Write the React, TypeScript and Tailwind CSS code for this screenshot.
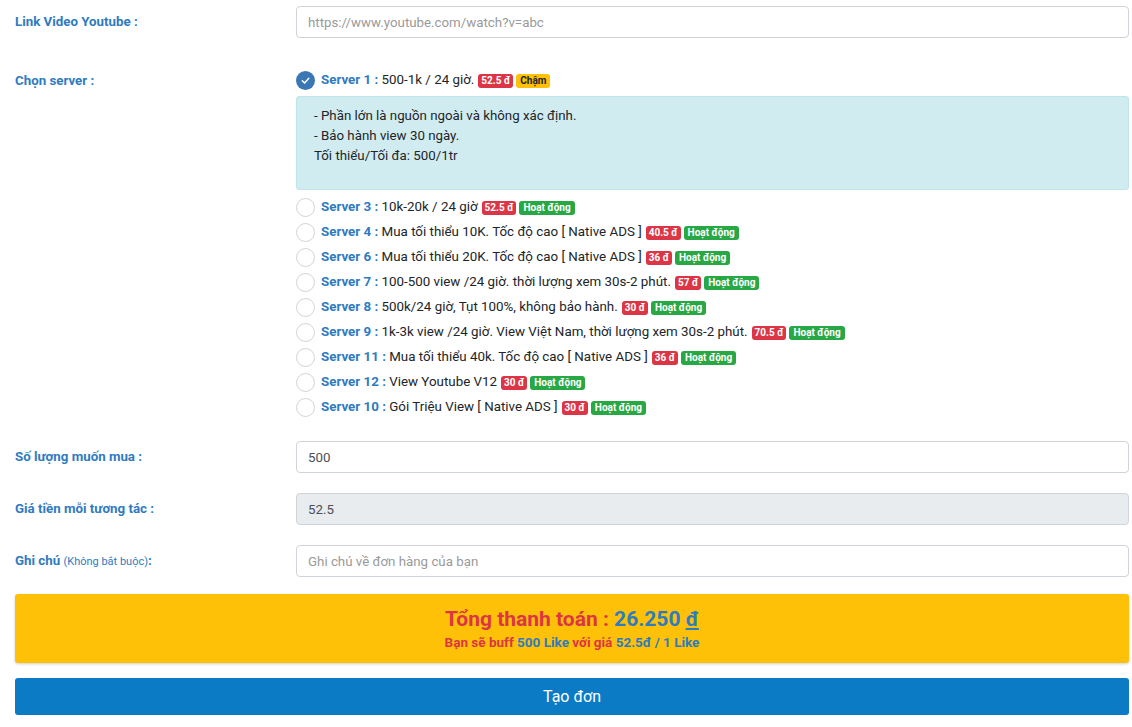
import { useState } from 'react';

type Server = { id: string; name: string; desc: string; price: string; status: 'slow' | 'ok' };

const SERVERS: Server[] = [
  { id: 's1', name: 'Server 1', desc: '500-1k / 24 giờ.', price: '52.5 đ', status: 'slow' },
  { id: 's3', name: 'Server 3', desc: '10k-20k / 24 giờ', price: '52.5 đ', status: 'ok' },
  { id: 's4', name: 'Server 4', desc: 'Mua tối thiểu 10K. Tốc độ cao [ Native ADS ]', price: '40.5 đ', status: 'ok' },
  { id: 's6', name: 'Server 6', desc: 'Mua tối thiểu 20K. Tốc độ cao [ Native ADS ]', price: '36 đ', status: 'ok' },
  { id: 's7', name: 'Server 7', desc: '100-500 view /24 giờ. thời lượng xem 30s-2 phút.', price: '57 đ', status: 'ok' },
  { id: 's8', name: 'Server 8', desc: '500k/24 giờ, Tụt 100%, không bảo hành.', price: '30 đ', status: 'ok' },
  { id: 's9', name: 'Server 9', desc: '1k-3k view /24 giờ. View Việt Nam, thời lượng xem 30s-2 phút.', price: '70.5 đ', status: 'ok' },
  { id: 's11', name: 'Server 11', desc: 'Mua tối thiểu 40k. Tốc độ cao [ Native ADS ]', price: '36 đ', status: 'ok' },
  { id: 's12', name: 'Server 12', desc: 'View Youtube V12', price: '30 đ', status: 'ok' },
  { id: 's10', name: 'Server 10', desc: 'Gói Triệu View [ Native ADS ]', price: '30 đ', status: 'ok' },
];

function Radio({ checked }: { checked: boolean }) {
  if (checked) {
    return (
      <span className="w-[19px] h-[19px] rounded-full bg-[#3a78b5] flex items-center justify-center shrink-0">
        <svg width="11" height="11" viewBox="0 0 12 12" fill="none">
          <path d="M2.5 6.2 L5 8.6 L9.6 3.6" stroke="white" strokeWidth="1.6" strokeLinecap="round" strokeLinejoin="round" />
        </svg>
      </span>
    );
  }
  return <span className="w-[19px] h-[19px] rounded-full border border-[#d4d4d4] bg-white shrink-0" />;
}

function ServerRow({ s, checked, onPick }: { s: Server; checked: boolean; onPick: () => void }) {
  return (
    <div className="h-[25px] flex items-center cursor-pointer" onClick={onPick}>
      <Radio checked={checked} />
      <span className="ml-[6px] text-[13.35px] text-[#212529] whitespace-nowrap">
        <span className="font-bold text-[#2f7bbf]">{s.name} :</span> {s.desc}
      </span>
      <span className="flex items-center gap-[3px] ml-[4px]">
        <span className="bg-[#dc3545] text-white text-[10px] font-bold leading-[14px] px-[3px] rounded-[3px]">{s.price}</span>
        {s.status === 'slow' ? (
          <span className="bg-[#ffc107] text-[#212529] text-[10px] font-bold leading-[14px] px-[4px] rounded-[3px]">Chậm</span>
        ) : (
          <span className="bg-[#28a745] text-white text-[10px] font-bold leading-[14px] px-[4px] rounded-[3px]">Hoạt động</span>
        )}
      </span>
    </div>
  );
}

const inputCls =
  'w-full h-[32px] border border-[#ced4da] rounded-[4px] px-[11px] text-[13.3px] text-[#495057] placeholder:text-[#9a9a9a] outline-none';

const labelCls = 'text-[13.3px] font-bold text-[#2f7bbf]';

export default function App() {
  const [picked, setPicked] = useState('s1');

  return (
    <div className="min-h-[727px] bg-white pl-[15px] pr-[3px] pt-[6px] font-['Roboto','Liberation_Sans',sans-serif]">
      {/* link */}
      <div className="grid grid-cols-[281px_1fr] items-center">
        <label className={labelCls}>Link Video Youtube :</label>
        <input className={inputCls} placeholder="https://www.youtube.com/watch?v=abc" />
      </div>

      {/* servers */}
      <div className="grid grid-cols-[281px_1fr] mt-[30px]">
        <div className={labelCls + ' h-[25px] flex items-center'}>Chọn server :</div>
        <div>
          <ServerRow s={SERVERS[0]} checked={picked === 's1'} onPick={() => setPicked('s1')} />
          <div className="mt-[3px] mb-[5px] h-[94px] bg-[#d1ecf1] border border-[#bee5eb] rounded-[3px] px-[17px] pt-[9px] text-[13.3px] leading-[20px] text-[#212529]">
            <div>- Phần lớn là nguồn ngoài và không xác định.</div>
            <div>- Bảo hành view 30 ngày.</div>
            <div>Tối thiểu/Tối đa: 500/1tr</div>
          </div>
          {SERVERS.slice(1).map((s) => (
            <ServerRow key={s.id} s={s} checked={picked === s.id} onPick={() => setPicked(s.id)} />
          ))}
        </div>
      </div>

      {/* quantity */}
      <div className="grid grid-cols-[281px_1fr] items-center mt-[21px]">
        <label className={labelCls}>Số lượng muốn mua :</label>
        <input className={inputCls} defaultValue="500" />
      </div>

      <div className="grid grid-cols-[281px_1fr] items-center mt-[20px]">
        <label className={labelCls}>Giá tiền mỗi tương tác :</label>
        <input className={inputCls + ' bg-[#e9ecef]'} defaultValue="52.5" disabled />
      </div>

      <div className="grid grid-cols-[281px_1fr] items-center mt-[20px]">
        <label className={labelCls}>
          Ghi chú <span className="font-normal text-[11px]">(Không bắt buộc)</span>:
        </label>
        <input className={inputCls} placeholder="Ghi chú về đơn hàng của bạn" />
      </div>

      {/* total */}
      <div className="mt-[17px] h-[69px] bg-[#ffc107] rounded-[3px] shadow-[0_1px_3px_rgba(0,0,0,0.2)] flex flex-col items-center justify-center">
        <div className="text-[21px] font-bold text-[#dc3545] leading-[26px]">
          Tổng thanh toán : <span className="text-[#2f7bbf]">26.250 <span className="underline">đ</span></span>
        </div>
        <div className="text-[13.5px] font-bold text-[#dc3545] leading-[18px] mt-[1px]">
          Bạn sẽ buff <span className="text-[#2f7bbf]">500 Like</span> với giá{' '}
          <span className="text-[#2f7bbf]">52.5đ / 1 Like</span>
        </div>
      </div>

      <button className="mt-[15px] w-full h-[37px] bg-[#0a7bc4] text-white text-[16px] rounded-[3px]">
        Tạo đơn
      </button>
    </div>
  );
}
